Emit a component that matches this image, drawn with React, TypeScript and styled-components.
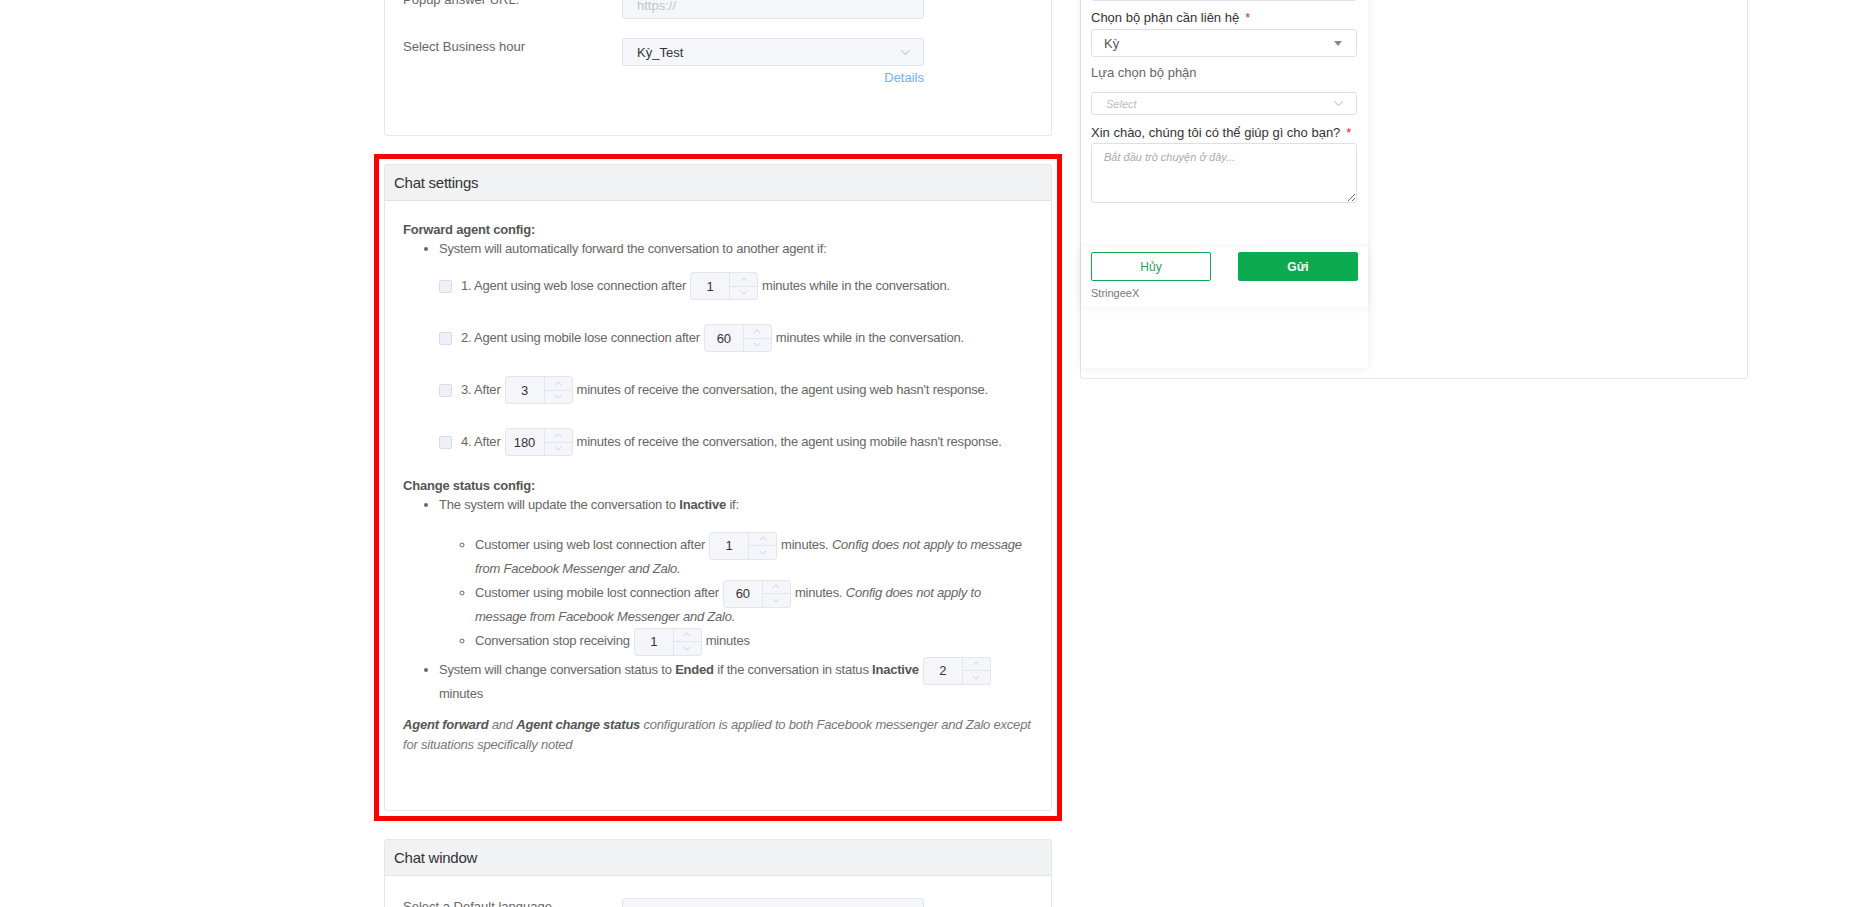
import styled, { createGlobalStyle } from "styled-components";

const GlobalStyle = createGlobalStyle`
  html, body {
    margin: 0;
    padding: 0;
    background: #fff;
  }
  body {
    font-family: "Liberation Sans", Arial, Helvetica, sans-serif;
    font-size: 13px;
    color: #666;
    overflow: hidden;
  }
`;

const Page = styled.div`
  display: grid;
  grid-template-columns: 668px 668px;
  column-gap: 28px;
  align-items: start;
  padding-left: 384px;
  margin-top: -30px;
`;

const LeftColumn = styled.div`
  display: flex;
  flex-direction: column;
  gap: 28px;
`;

const RightColumn = styled.div`
  margin-top: -28px;
`;

const Panel = styled.div`
  border: 1px solid #e4e6eb;
  border-radius: 3px;
  background: #fff;
`;

const FormPanel = styled(Panel)`
  padding: 20px 18px 49px 18px;
`;

// red annotation frame round the chat settings card
const RedFrame = styled.div`
  margin: -10px;
  padding: 5px;
  border: 5px solid #ff0000;
`;

const PanelHeader = styled.div`
  height: 35px;
  display: flex;
  align-items: center;
  padding: 0 9px;
  background: #f1f2f4;
  border-bottom: 1px solid #e3e4e8;
  border-radius: 3px 3px 0 0;
  font-size: 15px;
  letter-spacing: -0.25px;
  color: #333;
`;

const FormGrid = styled.div`
  display: grid;
  grid-template-columns: 219px 302px;
  row-gap: 19px;
`;

const FormLabel = styled.div`
  line-height: 18px;
  color: #666;
`;

const FormCell = styled.div`
  display: flex;
  flex-direction: column;
`;

const ControlBox = styled.div<{ $muted?: boolean }>`
  height: 28px;
  box-sizing: border-box;
  display: flex;
  align-items: center;
  justify-content: space-between;
  padding: 0 12px 0 14px;
  background: #f5f6fa;
  border: 1px solid #e1e4ec;
  border-radius: 3px;
  color: ${(p) => (p.$muted ? "#c0c4cc" : "#333")};
`;

const DetailsLink = styled.a`
  align-self: flex-end;
  margin-top: 4px;
  line-height: 16px;
  color: #6fb3f2;
  text-decoration: none;
`;

const SettingsBody = styled.div`
  padding: 20px 18px 55px 18px;
  line-height: 20px;
  letter-spacing: -0.21px;
`;

const SectionTitle = styled.div<{ $gap?: number }>`
  font-weight: bold;
  color: #555;
  line-height: 18px;
  margin-top: ${(p) => p.$gap ?? 0}px;
`;

const BulletList = styled.ul`
  margin: 0;
  padding-left: 36px;
  list-style: disc;
`;

const CircleList = styled.ul`
  margin: 18px 0 0 0;
  padding-left: 36px;
  list-style: circle;
`;

const Item = styled.li<{ $tall?: boolean; $gap?: number }>`
  line-height: ${(p) => (p.$tall ? 24 : 20)}px;
  margin-top: ${(p) => p.$gap ?? 0}px;
`;

const Strong = styled.b`
  color: #555;
`;

const Rows = styled.div`
  display: flex;
  flex-direction: column;
  gap: 24px;
  margin-top: 13px;
`;

const CheckRow = styled.label`
  display: flex;
  align-items: center;
  height: 28px;
  white-space: nowrap;
`;

const CheckBox = styled.span`
  width: 13px;
  height: 13px;
  box-sizing: border-box;
  margin-right: 9px;
  background: #edf0f7;
  border: 1px solid #d6dbe6;
  border-radius: 2px;
`;

const SpinBox = styled.span`
  display: inline-flex;
  vertical-align: middle;
  width: 68px;
  height: 28px;
  margin: -3px 4px;
  box-sizing: border-box;
  background: #f5f6fa;
  border: 1px solid #e3e6ee;
  border-radius: 3px;
  line-height: normal;
  letter-spacing: 0;
`;

const SpinValue = styled.span`
  width: 38px;
  display: flex;
  align-items: center;
  justify-content: center;
  color: #333;
`;

const SpinArrows = styled.span`
  flex: 1;
  display: flex;
  flex-direction: column;
  border-left: 1px solid #e3e6ee;
`;

const SpinArrow = styled.span`
  flex: 1;
  display: flex;
  align-items: center;
  justify-content: center;
  & + & {
    border-top: 1px solid #e3e6ee;
  }
`;

const Note = styled.p`
  margin: 9px 0 0 0;
  font-style: italic;
  line-height: 20px;
  color: #777;
`;

const WindowBody = styled.div`
  padding: 22px 18px 40px 18px;
`;

/* chat widget preview on the right */

const PreviewPanel = styled(Panel)`
  padding-bottom: 10px;
`;

const Widget = styled.div`
  width: 287px;
  background: #fff;
  box-shadow: 0 0 10px rgba(0, 0, 0, 0.08);
  padding-bottom: 61px;
`;

const WidgetBody = styled.div`
  padding: 10px 11px 0 10px;
  display: flex;
  flex-direction: column;
`;

const WidgetLabel = styled.div<{ $gap?: number; $soft?: boolean }>`
  line-height: 18px;
  margin-top: ${(p) => p.$gap ?? 0}px;
  color: ${(p) => (p.$soft ? "#666" : "#333")};
`;

const Required = styled.span`
  color: #f5222d;
  margin-left: 6px;
`;

const WidgetInput = styled.div<{ $gap?: number; $h?: number }>`
  height: ${(p) => p.$h ?? 28}px;
  margin-top: ${(p) => p.$gap ?? 2}px;
  box-sizing: border-box;
  display: flex;
  align-items: center;
  justify-content: space-between;
  padding: 0 12px;
  border: 1px solid #dcdfe6;
  border-radius: 3px;
  background: #fff;
  color: #555;
`;

const Placeholder = styled.span`
  font-style: italic;
  font-size: 11px;
  color: #b8bcc4;
  padding-left: 2px;
`;

const Triangle = styled.span`
  width: 0;
  height: 0;
  border-left: 4px solid transparent;
  border-right: 4px solid transparent;
  border-top: 5px solid #888;
  margin-right: 2px;
`;

const TextArea = styled.textarea`
  margin-top: 1px;
  height: 60px;
  box-sizing: border-box;
  padding: 7px 12px;
  border: 1px solid #dcdfe6;
  border-radius: 3px;
  font-family: inherit;
  resize: vertical;
  outline: none;
  &::placeholder {
    font-style: italic;
    font-size: 11px;
    color: #aaa;
  }
`;

const WidgetFooter = styled.div`
  margin-top: 44px;
  padding: 5px 10px 7px 10px;
  box-shadow: 0 0 8px rgba(0, 0, 0, 0.07);
`;

const ButtonRow = styled.div`
  display: grid;
  grid-template-columns: 1fr 1fr;
  column-gap: 27px;
`;

const Button = styled.button<{ $primary?: boolean }>`
  height: 29px;
  font-family: inherit;
  font-size: 12px;
  font-weight: ${(p) => (p.$primary ? "bold" : "normal")};
  border: 1px solid #0dab4f;
  border-radius: 2px;
  background: ${(p) => (p.$primary ? "#0dab4f" : "#fff")};
  color: ${(p) => (p.$primary ? "#fff" : "#2a9d5c")};
`;

const Brand = styled.div`
  margin-top: 5px;
  line-height: 14px;
  font-size: 11px;
  color: #777;
`;

const Chevron = ({ dir, size = 9, color = "#c8ccd4" }: { dir: "up" | "down"; size?: number; color?: string }) => (
  <svg width={size} height={size / 2 + 1} viewBox="0 0 10 6">
    <polyline
      points={dir === "up" ? "1,5 5,1 9,5" : "1,1 5,5 9,1"}
      fill="none"
      stroke={color}
      strokeWidth="1"
    />
  </svg>
);

const Spinner = ({ value }: { value: string }) => (
  <SpinBox>
    <SpinValue>{value}</SpinValue>
    <SpinArrows>
      <SpinArrow>
        <Chevron dir="up" size={8} />
      </SpinArrow>
      <SpinArrow>
        <Chevron dir="down" size={8} />
      </SpinArrow>
    </SpinArrows>
  </SpinBox>
);

const forwardRows = [
  { before: "1. Agent using web lose connection after", value: "1", after: "minutes while in the conversation." },
  { before: "2. Agent using mobile lose connection after", value: "60", after: "minutes while in the conversation." },
  { before: "3. After", value: "3", after: "minutes of receive the conversation, the agent using web hasn't response." },
  { before: "4. After", value: "180", after: "minutes of receive the conversation, the agent using mobile hasn't response." },
];

const App = () => {
  return (
    <>
      <GlobalStyle />
      <Page>
        <LeftColumn>
          <FormPanel>
            <FormGrid>
              <FormLabel>Popup answer URL:</FormLabel>
              <ControlBox $muted>https://</ControlBox>
              <FormLabel>Select Business hour</FormLabel>
              <FormCell>
                <ControlBox>
                  Kỳ_Test
                  <Chevron dir="down" size={11} />
                </ControlBox>
                <DetailsLink>Details</DetailsLink>
              </FormCell>
            </FormGrid>
          </FormPanel>

          <RedFrame>
            <Panel>
              <PanelHeader>Chat settings</PanelHeader>
              <SettingsBody>
                <SectionTitle>Forward agent config:</SectionTitle>
                <BulletList>
                  <Item>
                    System will automatically forward the conversation to another agent if:
                    <Rows>
                      {forwardRows.map((row) => (
                        <CheckRow key={row.before}>
                          <CheckBox />
                          {row.before}
                          <Spinner value={row.value} />
                          {row.after}
                        </CheckRow>
                      ))}
                    </Rows>
                  </Item>
                </BulletList>

                <SectionTitle $gap={21}>Change status config:</SectionTitle>
                <BulletList>
                  <Item>
                    The system will update the conversation to <Strong>Inactive</Strong> if:
                    <CircleList>
                      <Item $tall>
                        Customer using web lost connection after
                        <Spinner value="1" />
                        minutes. <i>Config does not apply to message from Facebook Messenger and Zalo.</i>
                      </Item>
                      <Item $tall>
                        Customer using mobile lost connection after
                        <Spinner value="60" />
                        minutes. <i>Config does not apply to message from Facebook Messenger and Zalo.</i>
                      </Item>
                      <Item $tall>
                        Conversation stop receiving
                        <Spinner value="1" />
                        minutes
                      </Item>
                    </CircleList>
                  </Item>
                  <Item $tall $gap={5}>
                    System will change conversation status to <Strong>Ended</Strong> if the conversation in status{" "}
                    <Strong>Inactive</Strong>
                    <Spinner value="2" /> minutes
                  </Item>
                </BulletList>

                <Note>
                  <Strong>Agent forward</Strong> and <Strong>Agent change status</Strong> configuration is applied to
                  both Facebook messenger and Zalo except for situations specifically noted
                </Note>
              </SettingsBody>
            </Panel>
          </RedFrame>

          <Panel>
            <PanelHeader>Chat window</PanelHeader>
            <WindowBody>
              <FormGrid>
                <FormLabel>Select a Default language</FormLabel>
                <ControlBox>
                  Tiếng Việt
                  <Chevron dir="down" size={11} />
                </ControlBox>
              </FormGrid>
            </WindowBody>
          </Panel>
        </LeftColumn>

        <RightColumn>
          <PreviewPanel>
            <Widget>
              <WidgetBody>
                <WidgetLabel>
                  Họ và tên<Required>*</Required>
                </WidgetLabel>
                <WidgetInput />
                <WidgetLabel $gap={8}>
                  Chọn bộ phận cần liên hệ<Required>*</Required>
                </WidgetLabel>
                <WidgetInput>
                  Kỳ
                  <Triangle />
                </WidgetInput>
                <WidgetLabel $gap={7} $soft>
                  Lựa chọn bộ phận
                </WidgetLabel>
                <WidgetInput $gap={10} $h={23}>
                  <Placeholder>Select</Placeholder>
                  <Chevron dir="down" size={11} />
                </WidgetInput>
                <WidgetLabel $gap={9}>
                  Xin chào, chúng tôi có thể giúp gì cho bạn?<Required>*</Required>
                </WidgetLabel>
                <TextArea placeholder="Bắt đầu trò chuyện ở đây..." readOnly />
              </WidgetBody>
              <WidgetFooter>
                <ButtonRow>
                  <Button>Hủy</Button>
                  <Button $primary>Gửi</Button>
                </ButtonRow>
                <Brand>StringeeX</Brand>
              </WidgetFooter>
            </Widget>
          </PreviewPanel>
        </RightColumn>
      </Page>
    </>
  );
};

export default App;
